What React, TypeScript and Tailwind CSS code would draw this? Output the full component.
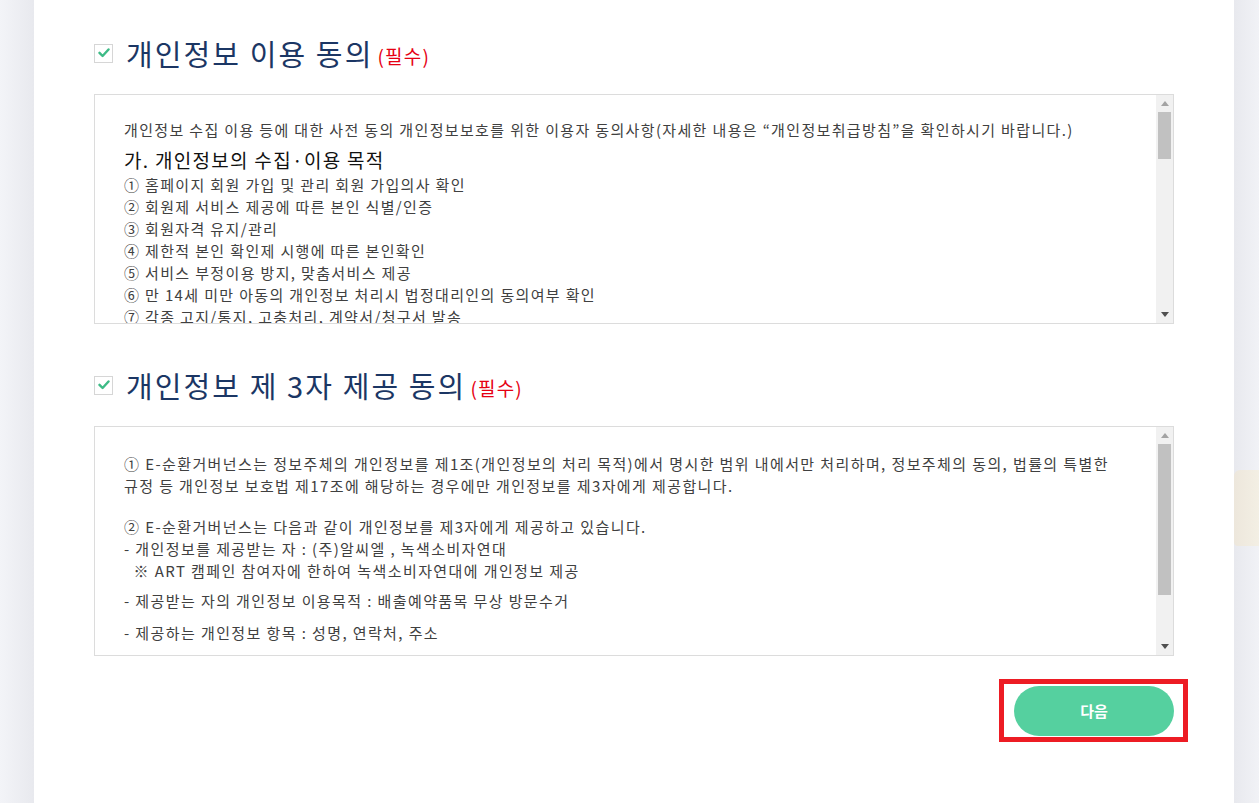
import React from "react";

const FONT = { fontFamily: '"Noto Sans CJK KR", "Liberation Sans", sans-serif' };

function Check() {
  return (
    <div className="w-[19px] h-[19px] border border-[#d6d6d6] bg-white flex items-center justify-center shrink-0">
      <svg width="12" height="10" viewBox="0 0 12 10">
        <path d="M1.5 4.8 L4.6 8 L10.5 1.5" fill="none" stroke="#3dbb86" strokeWidth="2.4" strokeLinecap="round" strokeLinejoin="round" />
      </svg>
    </div>
  );
}

function Heading({ title }: { title: string }) {
  return (
    <div className="flex items-center h-[36px]">
      <Check />
      <span className="ml-[13px] text-[29px] leading-[36px] text-[#1b3664] tracking-[2.1px]">{title}</span>
      <span className="ml-[4px] mt-[6px] text-[19px] leading-[24px] text-[#e60012] tracking-[1.2px]">(필수)</span>
    </div>
  );
}

function Scrollbar({ thumbTop, thumbHeight }: { thumbTop: number; thumbHeight: number }) {
  return (
    <div className="w-[17px] h-full bg-[#f1f1f1] relative shrink-0">
      <div className="h-[17px] flex items-center justify-center">
        <svg width="8" height="5" viewBox="0 0 8 5"><path d="M0 5 L4 0 L8 5 Z" fill="#a3a3a3" /></svg>
      </div>
      <div
        className="absolute left-[2px] right-[2px] bg-[#c1c1c1]"
        style={{ top: thumbTop, height: thumbHeight }}
      />
      <div className="absolute bottom-0 left-0 right-0 h-[17px] flex items-center justify-center">
        <svg width="8" height="5" viewBox="0 0 8 5"><path d="M0 0 L4 5 L8 0 Z" fill="#505050" /></svg>
      </div>
    </div>
  );
}

export default function App() {
  return (
    <div className="w-[1259px] h-[803px] flex overflow-hidden bg-white" style={FONT}>
      {/* left margin */}
      <div className="w-[34px] h-full bg-gradient-to-r from-[#f3f4f8] to-[#e8e9ee] shrink-0" />

      {/* main panel */}
      <div className="w-[1200px] h-full bg-white px-[60px] pt-[35px] shrink-0">
        <Heading title="개인정보 이용 동의" />

        <div className="mt-[23px] h-[230px] border border-[#dcdcdc] flex">
          <div className="flex-1 overflow-hidden pl-[29px] pt-[24px] text-[15px] leading-[22px] text-[#404040] tracking-[1.35px]">
            <p className="whitespace-nowrap">
              개인정보 수집 이용 등에 대한 사전 동의 개인정보보호를 위한 이용자 동의사항(자세한 내용은 “개인정보취급방침”을 확인하시기 바랍니다.)
            </p>
            <p className="mt-[6px] text-[19px] leading-[26px] text-[#111111] tracking-[1.3px]">가. 개인정보의 수집·이용 목적</p>
            <p className="mt-[1px]">① 홈페이지 회원 가입 및 관리 회원 가입의사 확인</p>
            <p>② 회원제 서비스 제공에 따른 본인 식별/인증</p>
            <p>③ 회원자격 유지/관리</p>
            <p>④ 제한적 본인 확인제 시행에 따른 본인확인</p>
            <p>⑤ 서비스 부정이용 방지, 맞춤서비스 제공</p>
            <p>⑥ 만 14세 미만 아동의 개인정보 처리시 법정대리인의 동의여부 확인</p>
            <p>⑦ 각종 고지/통지, 고충처리, 계약서/청구서 발송</p>
          </div>
          <Scrollbar thumbTop={17} thumbHeight={47} />
        </div>

        <div className="mt-[43px]">
          <Heading title="개인정보 제 3자 제공 동의" />
        </div>

        <div className="mt-[23px] h-[230px] border border-[#dcdcdc] flex">
          <div className="flex-1 overflow-hidden pl-[29px] pt-[26px] text-[15px] leading-[22px] text-[#404040] tracking-[1.4px]">
            <p className="whitespace-nowrap">
              ① E-순환거버넌스는 정보주체의 개인정보를 제1조(개인정보의 처리 목적)에서 명시한 범위 내에서만 처리하며, 정보주체의 동의, 법률의 특별한
              <br />
              규정 등 개인정보 보호법 제17조에 해당하는 경우에만 개인정보를 제3자에게 제공합니다.
            </p>
            <p className="mt-[19px]">② E-순환거버넌스는 다음과 같이 개인정보를 제3자에게 제공하고 있습니다.</p>
            <p>- 개인정보를 제공받는 자 : (주)알씨엘 , 녹색소비자연대</p>
            <p>&nbsp;&nbsp;※ ART 캠페인 참여자에 한하여 녹색소비자연대에 개인정보 제공</p>
            <p className="mt-[8px]">- 제공받는 자의 개인정보 이용목적 : 배출예약품목 무상 방문수거</p>
            <p className="mt-[10px]">- 제공하는 개인정보 항목 : 성명, 연락처, 주소</p>
          </div>
          <Scrollbar thumbTop={17} thumbHeight={151} />
        </div>

        <div className="mt-[30px] flex justify-end">
          <div className="relative">
            <button className="w-[160px] h-[50px] rounded-full bg-[#55d09f] text-white text-[15px] font-bold flex items-center justify-center">
              다음
            </button>
            <div className="absolute -left-[15px] -right-[14px] -top-[7px] -bottom-[6px] border-[5px] border-[#ed1c24] pointer-events-none" />
          </div>
        </div>
      </div>

      {/* right margin */}
      <div className="flex-1 h-full bg-gradient-to-r from-[#e8e9ee] to-[#f1f2f6] flex flex-col">
        <div className="h-[470px]" />
        <div className="h-[76px] bg-gradient-to-r from-[#ede7dc] to-[#f3efe4] rounded-tl-[6px] rounded-bl-[4px]" />
      </div>
    </div>
  );
}
